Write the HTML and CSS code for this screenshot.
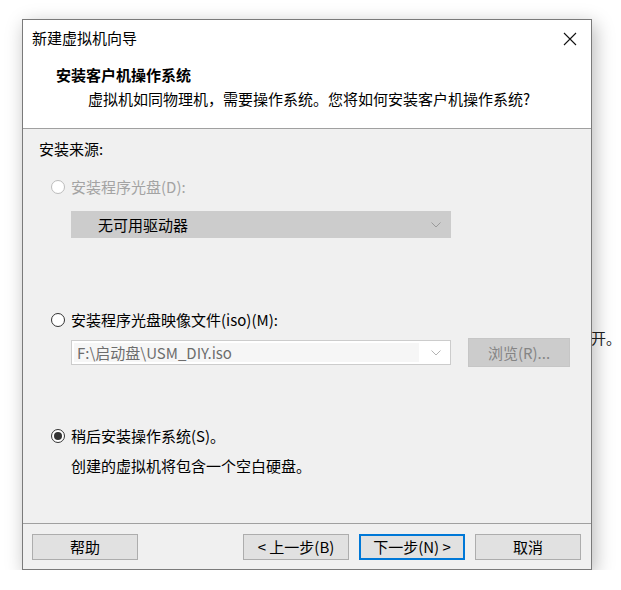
FILE: index.html
```html
<!DOCTYPE html>
<html lang="zh-CN">
<head>
  <meta charset="UTF-8">
  <title>新建虚拟机向导</title>
  <link rel="stylesheet" href="styles.css">
</head>
<body>
<div class="behind">开。</div>
<div class="window">
  <div class="titlebar">
    <span class="title">新建虚拟机向导</span>
    <svg class="close" width="14" height="14" viewBox="0 0 14 14">
      <path d="M1 1 L13 13 M13 1 L1 13" stroke="#111" stroke-width="1.1" fill="none"/>
    </svg>
  </div>
  <div class="header">
    <div class="head-title">安装客户机操作系统</div>
    <div class="head-sub">虚拟机如同物理机，需要操作系统。您将如何安装客户机操作系统?</div>
  </div>

  <div class="content">
    <div class="row label">安装来源:</div>

    <div class="row radio-row disabled gap-1">
      <span class="radio"></span>安装程序光盘(D):
    </div>
    <div class="select">
      <span>无可用驱动器</span>
      <svg class="chev" width="10" height="6" viewBox="0 0 10 6"><path d="M0.5 0.5 L5 5 L9.5 0.5" stroke="#9a9a9a" fill="none"/></svg>
    </div>

    <div class="row radio-row gap-2">
      <span class="radio"></span>安装程序光盘映像文件(iso)(M):
    </div>
    <div class="iso-row">
      <div class="combo">
        <div class="combo-field">F:\启动盘\USM_DIY.iso</div>
        <svg class="chev" width="10" height="6" viewBox="0 0 10 6"><path d="M0.5 0.5 L5 5 L9.5 0.5" stroke="#b4b4b4" fill="none"/></svg>
      </div>
      <div class="browse">浏览(R)...</div>
    </div>

    <div class="row radio-row gap-3">
      <span class="radio checked"></span>稍后安装操作系统(S)。
    </div>
    <div class="row note">创建的虚拟机将包含一个空白硬盘。</div>
  </div>

  <div class="footer">
    <button class="btn">帮助</button>
    <div class="spacer"></div>
    <button class="btn">&lt; 上一步(B)</button>
    <button class="btn primary">下一步(N) &gt;</button>
    <button class="btn">取消</button>
  </div>
</div>
</body>
</html>
```

FILE: styles.css
```css
body {
  margin: 0;
  background: #fff;
  font-family: "Noto Sans CJK SC", "Noto Sans", sans-serif;
  font-size: 15px;
  color: #000;
}
.behind {
  position: absolute;
  left: 591px;
  top: 327px;
  font-size: 15px;
  line-height: 22px;
  color: #222;
}
.window {
  position: relative;
  margin: 19px 0 0 22px;
  width: 568px;
  height: 549px;
  border: 1px solid #7a7a7a;
  background: #f0f0f0;
  display: flex;
  flex-direction: column;
  box-shadow: 3px 5px 18px rgba(0,0,0,0.28);
}
.titlebar {
  height: 37px;
  background: #fff;
  display: flex;
  align-items: center;
  justify-content: space-between;
  padding: 0 14px 0 9px;
}
.title {
  line-height: 20px;
  margin-top: -1px;
}
.close {
  display: block;
  margin-top: 1px;
}
.header {
  height: 71px;
  background: #fff;
  border-bottom: 1px solid #a0a0a0;
  padding-left: 33px;
}
.head-title {
  font-weight: bold;
  line-height: 20px;
  margin-top: 8px;
}
.head-sub {
  line-height: 20px;
  margin-top: 4px;
  padding-left: 32px;
}
.content {
  flex: 1;
  padding: 10px 0 0 16px;
  border-bottom: 1px solid #a0a0a0;
}
.row {
  line-height: 20px;
  height: 20px;
}
.radio-row {
  display: flex;
  align-items: center;
  padding-left: 12px;
}
.gap-1 { margin-top: 18px; }
.gap-2 { margin-top: 72px; }
.gap-3 { margin-top: 59px; }
.disabled {
  color: #a3a3a3;
}
.radio {
  width: 12px;
  height: 12px;
  border: 1px solid #333;
  border-radius: 50%;
  background: #fff;
  margin-right: 6px;
  position: relative;
  flex: none;
}
.disabled .radio {
  border-color: #bcbcbc;
}
.radio.checked::after {
  content: "";
  position: absolute;
  left: 2px;
  top: 2px;
  width: 8px;
  height: 8px;
  border-radius: 50%;
  background: #333;
}
.select {
  margin: 14px 0 0 32px;
  height: 25px;
  border: 1px solid #cccccc;
  background: #cccccc;
  display: flex;
  align-items: center;
  justify-content: space-between;
  padding: 0 9px 0 26px;
  box-sizing: content-box;
  width: 343px;
}
.select span {
  line-height: 20px;
}
.chev {
  display: block;
}
.iso-row {
  margin: 8px 0 0 32px;
  display: flex;
  align-items: center;
}
.combo {
  height: 23px;
  border: 1px solid #cccccc;
  background: #fff;
  display: flex;
  align-items: center;
  padding: 0 9px 0 2px;
  box-sizing: content-box;
  width: 367px;
}
.combo-field {
  flex: 1;
  height: 19px;
  line-height: 19px;
  background: #f6f6f6;
  color: #6d6d6d;
  padding-left: 3px;
  margin-right: 12px;
}
.browse {
  margin-left: 17px;
  width: 100px;
  height: 27px;
  line-height: 27px;
  border: 1px solid #c6c6c6;
  background: #cccccc;
  color: #858585;
  text-align: center;
}
.note {
  margin-top: 10px;
  padding-left: 32px;
}
.footer {
  height: 45px;
  display: flex;
  align-items: flex-start;
  gap: 10px;
  padding: 10px 10px 0 9px;
  box-sizing: border-box;
}
.spacer {
  flex: 1;
}
.btn {
  width: 106px;
  height: 26px;
  border: 1px solid #adadad;
  background: #e1e1e1;
  font-family: inherit;
  font-size: 15px;
  color: #000;
  padding: 0;
  line-height: 20px;
}
.btn.primary {
  border: 2px solid #0078d7;
}
```
